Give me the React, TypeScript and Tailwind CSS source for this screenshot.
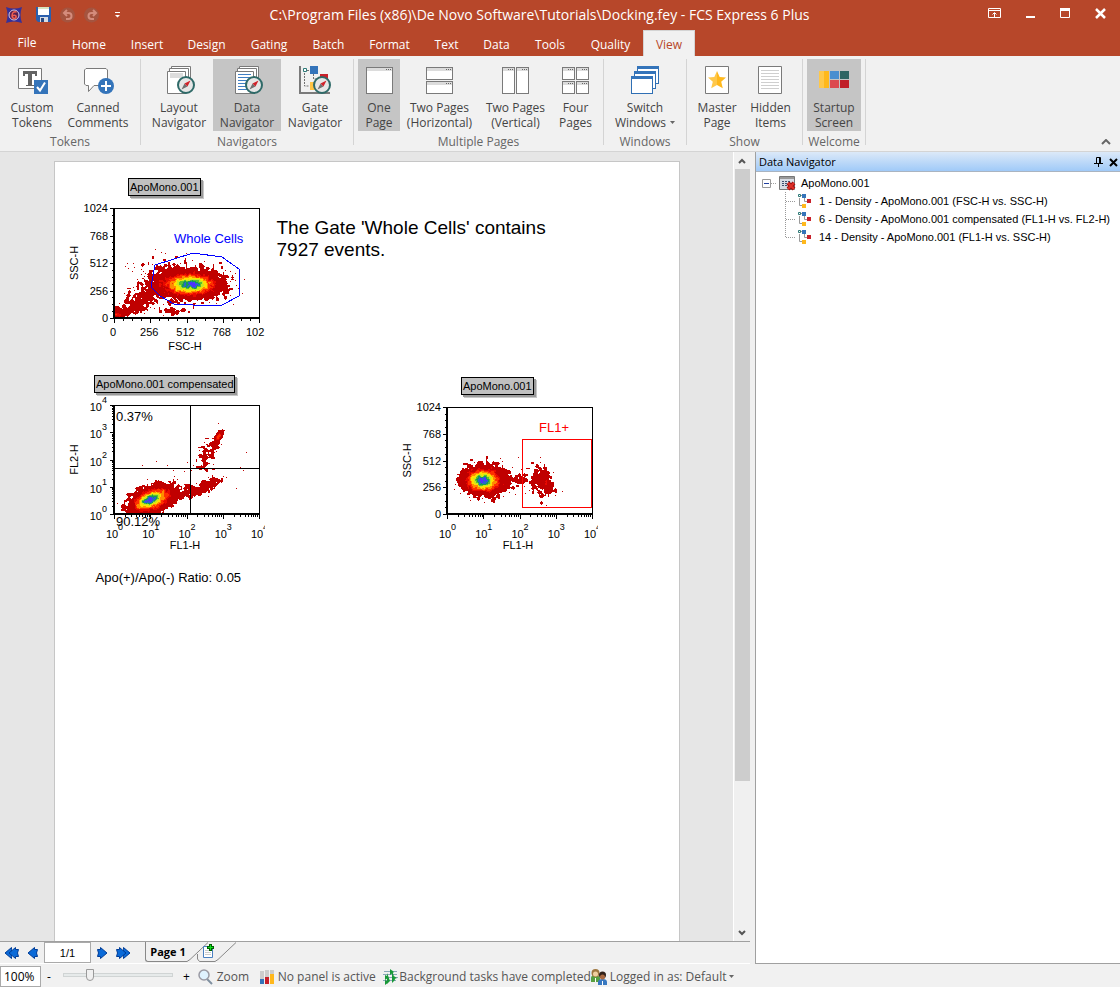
import { useState, type ReactNode } from "react";
import clsx from "clsx";

/* ---------- density plot data ---------- */

type Cluster = { n: number; x: number; y: number; sx: number; sy: number; tilt?: number };

const palette = ["#c00000", "#e80800", "#ff3000", "#ff8c00", "#ffe000", "#c8e820", "#58c030", "#189858", "#2868c8", "#5030ff"];
const levels = [0.9, 4, 7, 11, 16, 22, 28, 34, 40, 46];

function createRandom(seed: number) {
  let s = seed;
  return () => {
    s = (s * 1664525 + 1013904223) % 4294967296;
    return s / 4294967296;
  };
}

function buildDensity(width: number, height: number, clusters: Cluster[], seed: number): string[] {
  const random = createRandom(seed);
  const grid = new Float32Array(width * height);
  const gauss = () => Math.sqrt(-2 * Math.log(random() + 1e-9)) * Math.cos(2 * Math.PI * random());

  clusters.forEach((c) => {
    for (let i = 0; i < c.n; i++) {
      const gx = gauss();
      const px = Math.round(c.x + gx * c.sx);
      const py = Math.round(c.y + gauss() * c.sy + gx * (c.tilt ?? 0));
      for (let dy = -2; dy <= 2; dy++) {
        for (let dx = -2; dx <= 2; dx++) {
          const x = px + dx;
          const y = py + dy;
          if (x < 1 || y < 1 || x >= width || y >= height - 1) continue;
          grid[y * width + x] += Math.exp(-(dx * dx + dy * dy) / 1.5);
        }
      }
    }
  });

  const max = grid.reduce((a, b) => Math.max(a, b), 0);
  const scale = 53 / max;
  const paths = palette.map(() => "");
  const levelOf = (v: number) => {
    if (v < 0.56) return -1;
    let level = 0;
    for (let i = 1; i < levels.length; i++) if (v * scale >= levels[i]) level = i;
    return level;
  };

  for (let y = 0; y < height; y++) {
    let x = 0;
    while (x < width) {
      const level = levelOf(grid[y * width + x]);
      let end = x + 1;
      while (end < width && levelOf(grid[y * width + end]) === level) end++;
      if (level >= 0) paths[level] += `M${x} ${y}h${end - x}v1h${x - end}z`;
      x = end;
    }
  }
  return paths;
}

const wholeCells = buildDensity(145, 110, [
  { n: 2600, x: 76, y: 76, sx: 15, sy: 7 },
  { n: 3200, x: 76, y: 76, sx: 10, sy: 4 },
  { n: 250, x: 50, y: 74, sx: 12, sy: 8 },
  { n: 210, x: 26, y: 91, sx: 11, sy: 7, tilt: -4 },
  { n: 70, x: 12, y: 103, sx: 8, sy: 3, tilt: -2 },
  { n: 70, x: 2, y: 106, sx: 3, sy: 1 },
  { n: 55, x: 50, y: 56, sx: 20, sy: 7 },
  { n: 40, x: 60, y: 103, sx: 7, sy: 2 },
], 11);

const compensated = buildDensity(145, 109, [
  { n: 2200, x: 36, y: 95, sx: 9, sy: 6, tilt: -2 },
  { n: 1500, x: 36, y: 94, sx: 6, sy: 3, tilt: -2 },
  { n: 450, x: 48, y: 91, sx: 9, sy: 5, tilt: -2 },
  { n: 60, x: 74, y: 86, sx: 6, sy: 3 },
  { n: 130, x: 93, y: 80, sx: 8, sy: 3, tilt: -4 },
  { n: 110, x: 104, y: 32, sx: 2, sy: 3, tilt: -2 },
  { n: 80, x: 94, y: 46, sx: 5, sy: 7, tilt: -3 },
  { n: 24, x: 75, y: 64, sx: 24, sy: 6 },
], 5);

const sideScatter = buildDensity(145, 107, [
  { n: 2200, x: 35, y: 73, sx: 9, sy: 6 },
  { n: 1600, x: 35, y: 73, sx: 6, sy: 4 },
  { n: 450, x: 42, y: 72, sx: 11, sy: 8 },
  { n: 50, x: 72, y: 73, sx: 6, sy: 3 },
  { n: 230, x: 95, y: 74, sx: 6, sy: 8, tilt: 2 },
], 23);

/* ---------- plots ---------- */

const BOX_X = 50;
const BOX_Y = 32;
const BOX_W = 145;
const logMinor = [0.301, 0.477, 0.602, 0.699, 0.778, 0.845, 0.903, 0.954];

type PlotProps = {
  title: string;
  titleWidth: number;
  height: number;
  density: string[];
  xName: string;
  yName: string;
  logX?: boolean;
  logY?: boolean;
  className: string;
  children?: ReactNode;
};

function Plot({ title, titleWidth, height, density, xName, yName, logX, logY, className, children }: PlotProps) {
  const bottom = BOX_Y + height;
  const steps = [0, 1, 2, 3, 4];
  const minor = (log?: boolean) => (log ? logMinor : [0.25, 0.5, 0.75]);
  const titleX = 100 - Math.floor(titleWidth / 2);

  return (
    <svg className={clsx("absolute", className)} width="201" height="178" fontFamily="Liberation Sans, Arial, sans-serif" fontSize="11">
      <rect x={titleX + 3} y="5" width={titleWidth} height="18" fill="#c8c8c8" />
      <rect x={titleX + 2} y="4" width={titleWidth} height="18" fill="#9a9a9a" />
      <rect x={titleX + 0.5} y="2.5" width={titleWidth - 1} height="17" fill="#c0c0c0" stroke="#000" />
      <text x={titleX + 2} y="15">{title}</text>

      <g transform={`translate(${BOX_X} ${BOX_Y})`} shapeRendering="crispEdges">
        {density.map((d, i) => (
          <path key={palette[i]} d={d} fill={palette[i]} />
        ))}
      </g>

      <g shapeRendering="crispEdges" stroke="#000" fill="none">
        <path d={`M${BOX_X} ${BOX_Y + 0.5}h${BOX_W + 0.5}V${bottom}`} />
        <path d={`M${BOX_X} ${BOX_Y}V${bottom}H${BOX_X + BOX_W + 1}`} strokeWidth="2" />
        {steps.map((s) => {
          const x = Math.round(BOX_X + (BOX_W * s) / 4) + 0.5;
          const y = Math.round(bottom - (height * s) / 4) + 0.5;
          return <path key={s} d={`M${x} ${bottom}v5M${BOX_X - 4} ${y}h4`} />;
        })}
        {steps.slice(0, 4).map((s) => (
          <g key={s}>
            {minor(logX).map((m) => (
              <path key={m} d={`M${Math.round(BOX_X + (BOX_W * (s + m)) / 4) + 0.5} ${bottom}v3`} />
            ))}
            {minor(logY).map((m) => (
              <path key={m} d={`M${BOX_X - 2} ${Math.round(bottom - (height * (s + m)) / 4) + 0.5}h2`} />
            ))}
          </g>
        ))}
      </g>

      {steps.map((s) => {
        const x = BOX_X + (BOX_W * s) / 4;
        return logX ? (
          <g key={s}>
            <text x={x - 8} y={bottom + 24}>10</text>
            <text x={x + 4} y={bottom + 16} fontSize="9">{s}</text>
          </g>
        ) : (
          <text key={s} x={s === 4 ? x - 13 : x - 1} y={bottom + 18} textAnchor={s === 4 ? "start" : "middle"}>
            {s === 4 ? "102" : s * 256}
          </text>
        );
      })}
      {steps.map((s) => {
        const y = bottom - (height * s) / 4;
        return logY ? (
          <g key={s}>
            <text x="38" y={y + 6} textAnchor="end">10</text>
            <text x="38" y={y - 2} fontSize="9">{s}</text>
          </g>
        ) : (
          <text key={s} x="44" y={y + 4} textAnchor="end">{s * 256}</text>
        );
      })}
      <text x="121" y={bottom + (logX ? 35 : 32)} textAnchor="middle">{xName}</text>
      <text transform={`translate(14 ${BOX_Y + height / 2}) rotate(-90)`} textAnchor="middle">{yName}</text>
      <g transform={`translate(${BOX_X} ${BOX_Y})`}>{children}</g>
    </svg>
  );
}

/* ---------- ribbon icons ---------- */

function Icon({ children }: { children: ReactNode }) {
  return (
    <svg width="32" height="32" viewBox="0 0 32 32" fill="none" className="shrink-0">
      {children}
    </svg>
  );
}

function Compass() {
  return (
    <g>
      <circle cx="23" cy="21" r="8" fill="#e6e6e6" stroke="#2f6a68" strokeWidth="2" />
      <path d="M18.500 25.500 21.500 19.500 24.500 22.500z" fill="#707070" />
      <path d="M27.500 16.500 24.500 22.500 21.500 19.500z" fill="#d0222a" />
    </g>
  );
}

function StackedPages() {
  return (
    <g fill="#fff" stroke="#7a7a7a">
      <path d="M8.500 2.500h19v21h-19z" />
      <path d="M6.500 4.500h19v21h-19z" />
      <path d="M4.500 7.500h18v22h-18z" />
    </g>
  );
}

function PageFrame({ x, y, w, h }: { x: number; y: number; w: number; h: number }) {
  return (
    <g shapeRendering="crispEdges">
      <rect x={x + 0.5} y={y + 0.5} width={w - 1} height={h - 1} fill="#fff" stroke="#7a7a7a" />
      <rect x={x + 1} y={y + 1} width={w - 2} height="3" fill="#dcdcdc" />
      <path d={`M${x + w - 7} ${y + 2.5}h1m1 0h1m1 0h1`} stroke="#666" />
    </g>
  );
}

const CustomTokensIcon = () => (
  <Icon>
    <path d="M2.500 4.500h23v20h-23z" fill="#fff" stroke="#7a7a7a" />
    <path d="M7 7h14v5h-2v-2h-3v11h2v1h-8v-1h2V10H9v2H7z" fill="#636363" />
    <path d="M18 16h14v14H18z" fill="#3474ba" />
    <path d="m21 23 3 3.500 5-8" stroke="#fff" strokeWidth="2" />
  </Icon>
);

const CannedCommentsIcon = () => (
  <Icon>
    <path d="M4 4.500h20l1.500 1.500v14L24 21.500H12L6.500 27.500V21.500H4L2.500 20V6z" fill="#fff" stroke="#7a7a7a" />
    <circle cx="24" cy="22" r="8" fill="#3474ba" />
    <path d="M19 22h10M24 17v10" stroke="#fff" strokeWidth="2" />
  </Icon>
);

const LayoutNavigatorIcon = () => (
  <Icon>
    <StackedPages />
    <path d="M7 9h13v5H7z" fill="#dcdcdc" />
    <Compass />
  </Icon>
);

const DataNavigatorIcon = () => (
  <Icon>
    <StackedPages />
    <path d="M7 10.500h13M7 13.500h13M7 16.500h13M7 19.500h13M7 22.500h13M7 25.500h13" stroke="#3f7fc4" />
    <Compass />
  </Icon>
);

const GateNavigatorIcon = () => (
  <Icon>
    <path d="M1 2v27h30" stroke="#7a7a7a" strokeWidth="2" />
    <path d="M5.500 9v13h5M8 6.500h3M14.500 10v5h6" stroke="#707070" strokeDasharray="2 1" />
    <path d="M4.500 4.500h3v3h-3z" fill="#fff" stroke="#2f7a78" />
    <path d="M11 2h8v8h-8z" fill="#3474ba" />
    <path d="M21 10h8v8h-8z" fill="#c8202a" />
    <path d="M11 18h8v8h-8z" fill="#ffc444" />
    <Compass />
  </Icon>
);

const OnePageIcon = () => (
  <Icon>
    <PageFrame x={3} y={3} w={27} h={27} />
  </Icon>
);

const TwoHorizontalIcon = () => (
  <Icon>
    <PageFrame x={2} y={3} w={27} h={13} />
    <PageFrame x={2} y={17} w={27} h={13} />
  </Icon>
);

const TwoVerticalIcon = () => (
  <Icon>
    <PageFrame x={2} y={3} w={13} h={27} />
    <PageFrame x={16} y={3} w={13} h={27} />
  </Icon>
);

const FourPagesIcon = () => (
  <Icon>
    <PageFrame x={2} y={3} w={13} h={13} />
    <PageFrame x={16} y={3} w={13} h={13} />
    <PageFrame x={2} y={17} w={13} h={13} />
    <PageFrame x={16} y={17} w={13} h={13} />
  </Icon>
);

const SwitchWindowsIcon = () => (
  <Icon>
    {[[8, 2], [5, 7], [2, 12]].map(([x, y]) => (
      <g key={x}>
        <rect x={x + 0.5} y={y + 0.5} width="21" height="17" fill="#fff" stroke="#2f6fb4" />
        <path d={`M${x} ${y}h22v3H${x}z`} fill="#3474ba" />
      </g>
    ))}
  </Icon>
);

const MasterPageIcon = () => (
  <Icon>
    <path d="M4.500 2.500h23v27h-23z" fill="#fff" stroke="#7a7a7a" />
    <path d="m16 7 2.700 6 6.300.6-4.800 4.200 1.600 6.500L16 21z" fill="#ffb81c" />
    <path d="m16 7-2.700 6-6.300.6 4.800 4.200-1.600 6.500L16 21z" fill="#ffc84a" />
  </Icon>
);

const HiddenItemsIcon = () => (
  <Icon>
    <path d="M3.500 2.500h23v27h-23z" fill="#fff" stroke="#7a7a7a" />
    <path d="M6 6.500h18M6 9.500h18M6 12.500h18M6 15.500h18M6 18.500h18M6 21.500h18M6 24.500h18" stroke="#cfcfcf" />
  </Icon>
);

const StartupIcon = () => (
  <Icon>
    <path d="M1 7h5v17H1z" fill="#ffc84a" />
    <path d="M6 7h5v17H6z" fill="#ffb81c" />
    <path d="M12 7h9v8h-9z" fill="#4a8ed0" />
    <path d="M22 7h9v8h-9z" fill="#2f6563" />
    <path d="M12 16h9v8h-9z" fill="#dc4a50" />
    <path d="M22 16h9v8h-9z" fill="#c01e28" />
  </Icon>
);

const TreeIcon = () => (
  <svg width="13" height="14" fill="none" className="shrink-0">
    <path d="M1.500 4v7.500H5M3 1.500h3M6.500 4v3.500H10" stroke="#999" />
    <path d="M.5.500h2v2h-2z" fill="#fff" stroke="#2f7a78" />
    <path d="M4 0h4v4H4z" fill="#3474ba" />
    <path d="M9 5h4v4H9z" fill="#c8202a" />
    <path d="M4 10h4v4H4z" fill="#ffb81c" />
  </svg>
);

/* ---------- ribbon ---------- */

const tabs = [
  { label: "Home", width: "w-[60px]" },
  { label: "Insert", width: "w-[56px]" },
  { label: "Design", width: "w-[63px]" },
  { label: "Gating", width: "w-[62px]" },
  { label: "Batch", width: "w-[57px]" },
  { label: "Format", width: "w-[65px]" },
  { label: "Text", width: "w-[49px]" },
  { label: "Data", width: "w-[51px]" },
  { label: "Tools", width: "w-[56px]" },
  { label: "Quality", width: "w-[65px]" },
  { label: "View", width: "w-[52px]" },
];

const groups = [
  {
    name: "Tokens",
    items: [
      { lines: ["Custom", "Tokens"], width: "w-[56px]", icon: <CustomTokensIcon /> },
      { lines: ["Canned", "Comments"], width: "w-[76px]", icon: <CannedCommentsIcon /> },
    ],
  },
  {
    name: "Navigators",
    items: [
      { lines: ["Layout", "Navigator"], width: "w-[68px]", icon: <LayoutNavigatorIcon /> },
      { lines: ["Data", "Navigator"], width: "w-[68px]", icon: <DataNavigatorIcon />, active: true },
      { lines: ["Gate", "Navigator"], width: "w-[68px]", icon: <GateNavigatorIcon /> },
    ],
  },
  {
    name: "Multiple Pages",
    items: [
      { lines: ["One", "Page"], width: "w-[42px]", icon: <OnePageIcon />, active: true },
      { lines: ["Two Pages", "(Horizontal)"], width: "w-[79px]", icon: <TwoHorizontalIcon /> },
      { lines: ["Two Pages", "(Vertical)"], width: "w-[73px]", icon: <TwoVerticalIcon /> },
      { lines: ["Four", "Pages"], width: "w-[47px]", icon: <FourPagesIcon /> },
    ],
  },
  {
    name: "Windows",
    items: [{ lines: ["Switch", "Windows"], width: "w-[74px]", icon: <SwitchWindowsIcon />, menu: true }],
  },
  {
    name: "Show",
    items: [
      { lines: ["Master", "Page"], width: "w-[52px]", icon: <MasterPageIcon /> },
      { lines: ["Hidden", "Items"], width: "w-[55px]", icon: <HiddenItemsIcon /> },
    ],
  },
  {
    name: "Welcome",
    items: [{ lines: ["Startup", "Screen"], width: "w-[54px]", icon: <StartupIcon />, active: true }],
  },
];

type RibbonItem = { lines: string[]; width: string; icon: ReactNode; active?: boolean; menu?: boolean };

function RibbonButton({ lines, width, icon, active, menu }: RibbonItem) {
  return (
    <button
      className={clsx(
        "flex h-[72px] shrink-0 flex-col items-center pt-[5px] text-xs leading-[15px] whitespace-nowrap text-[#444]",
        width,
        active && "bg-[#c5c5c5]",
      )}
    >
      {icon}
      <span className="mt-1">{lines[0]}</span>
      <span className="flex items-center gap-1">
        {lines[1]}
        {menu && (
          <svg width="5" height="3"><path d="M0 0h5L2.500 3z" fill="#666" /></svg>
        )}
      </span>
    </button>
  );
}

function TitleBar() {
  return (
    <header className="flex h-[30px] shrink-0 items-center bg-[#b7472a] text-white">
      <div className="flex w-[200px] shrink-0 items-center pl-1.5">
        <svg width="16" height="16" fill="none">
          <path d="M0 0q8 3 16 0-3 8 0 16-8-3-16 0Q3 8 0 0z" fill="#34309a" />
          <circle cx="8" cy="8" r="5" fill="#5a2050" stroke="#d8c8e0" />
          <path d="M10.500 5Q6 4 6 9q.5 2.500 2.500 2.500 2-.5 1.500-2.500-1.500-1.500-4 0" stroke="#f06050" strokeWidth="1.500" />
        </svg>
        <button aria-label="Save" className="ml-3.5">
          <svg width="16" height="16">
            <path d="M0 0h15v15H2l-2-2z" fill="#2a5fae" />
            <path d="M2 0h11v8H2z" fill="#fff" />
            <path d="M2 0h11v2H2z" fill="#d8e4c0" />
            <path d="M4 10h8v5H4z" fill="#d8dce4" />
            <path d="M5 11h3v4H5z" fill="#2a4a80" />
          </svg>
        </button>
        <button aria-label="Undo" className="ml-2">
          <svg width="16" height="16" fill="none">
            <circle cx="7.500" cy="8" r="7.500" fill="#a5543f" />
            <path d="M7 3 4 6l3 3M4 6h4.500a3 3 0 0 1 0 6H6" stroke="#d48c7c" strokeWidth="2" />
          </svg>
        </button>
        <button aria-label="Redo" className="ml-2">
          <svg width="16" height="16" fill="none">
            <circle cx="7.500" cy="8" r="7.500" fill="#a5543f" />
            <path d="m9 3 3 3-3 3M12 6H7.500a3 3 0 0 0 0 6H10" stroke="#d48c7c" strokeWidth="2" />
          </svg>
        </button>
        <button aria-label="Customize toolbar" className="ml-3.5">
          <svg width="7" height="6"><path d="M1 0h5v1H1zM1 3h5L3.500 5.500z" fill="#fff" /></svg>
        </button>
      </div>
      <h1 className="min-w-0 flex-1 truncate text-center text-sm">
        C:\Program Files (x86)\De Novo Software\Tutorials\Docking.fey - FCS Express 6 Plus
      </h1>
      <div className="flex w-[241px] shrink-0 items-center justify-end gap-6 pr-3.5 pb-1">
        <button aria-label="Ribbon display options">
          <svg width="13" height="11" fill="none" stroke="#fff">
            <path d="M.5.500h12v9H.5zM0 2.500h13M6.500 9V5M4.500 6.500l2-2 2 2" />
          </svg>
        </button>
        <button aria-label="Minimize">
          <svg width="11" height="11"><path d="M1 8h9v2H1z" fill="#fff" /></svg>
        </button>
        <button aria-label="Maximize">
          <svg width="11" height="11" fill="none"><path d="M.5.500h9v9h-9z" stroke="#fff" /><path d="M0 0h10v3H0z" fill="#fff" /></svg>
        </button>
        <button aria-label="Close">
          <svg width="11" height="11"><path d="m1 1 9 9M10 1 1 10" stroke="#fff" strokeWidth="2.500" /></svg>
        </button>
      </div>
    </header>
  );
}

function Ribbon() {
  const [tab, setTab] = useState("View");

  return (
    <>
      <nav className="flex h-[26px] shrink-0 bg-[#b7472a] text-xs text-white">
        <button className="mr-[5px] w-[54px]">File</button>
        {tabs.map(({ label, width }) => (
          <button
            key={label}
            onClick={() => setTab(label)}
            className={clsx("shrink-0 pt-[3px]", width, tab === label && "border border-b-0 border-[#d4d4d4] bg-[#f1f1f1] text-[#b7472a]")}
          >
            {label}
          </button>
        ))}
      </nav>
      <div className="flex h-24 shrink-0 border-b border-[#d4d4d4] bg-[#f1f1f1] pt-px">
        {groups.map((group) => (
          <section key={group.name} className="flex shrink-0">
            <div className="flex flex-col px-1 pt-0.5">
              <div className="flex">
                {group.items.map((item) => (
                  <RibbonButton key={item.lines.join(" ")} {...item} />
                ))}
              </div>
              <h2 className="flex flex-1 items-center justify-center pt-0.5 text-xs text-[#666]">{group.name}</h2>
            </div>
            <div className="mt-0.5 mb-[6px] w-px bg-[#d4d4d4]" />
          </section>
        ))}
        <button aria-label="Collapse ribbon" className="mt-auto ml-auto pr-[9px] pb-1.5">
          <svg width="10" height="6" fill="none"><path d="m1 5 4-4 4 4" stroke="#666" strokeWidth="2" /></svg>
        </button>
      </div>
    </>
  );
}

/* ---------- document ---------- */

function Document() {
  return (
    <main className="flex min-w-0 flex-1 overflow-hidden bg-[#e6e6e6] pt-[9px]">
      <div className="relative mx-auto w-[626px] shrink-0 border border-b-0 border-[#c6c6c6] bg-white font-['Liberation_Sans',Arial,sans-serif] text-black">
        <Plot title="ApoMono.001" titleWidth={73} height={110} density={wholeCells} xName="FSC-H" yName="SSC-H" className="top-[14px] left-[9px]">
          <path d="m41 57 38-12 29 4 17 12v27l-17 9H79l-19-1-14-8-9-9z" fill="none" stroke="#00f" shapeRendering="crispEdges" />
          <text x="60" y="35" fontSize="13" fill="#00f">Whole Cells</text>
        </Plot>
        <p className="absolute top-[55px] left-[222px] w-[290px] text-[19px] leading-[22px]">
          The Gate 'Whole Cells' contains 7927 events.
        </p>
        <Plot title="ApoMono.001 compensated" titleWidth={141} height={109} density={compensated} xName="FL1-H" yName="FL2-H" logX logY className="top-[211px] left-[9px]">
          <path d="M76.500 0v109M0 63.500h145" stroke="#000" shapeRendering="crispEdges" />
          <text x="2" y="16" fontSize="13">0.37%</text>
          <text x="2" y="121" fontSize="13">90.12%</text>
        </Plot>
        <Plot title="ApoMono.001" titleWidth={73} height={107} density={sideScatter} xName="FL1-H" yName="SSC-H" logX className="top-[213px] left-[342px]">
          <path d="M75.500 32.500h69v68h-69z" fill="none" stroke="#f00" shapeRendering="crispEdges" />
          <text x="92" y="25" fontSize="13" fill="#f00">FL1+</text>
        </Plot>
        <p className="absolute top-[407px] left-[41px] text-[13px] leading-[18px]">Apo(+)/Apo(-) Ratio: 0.05</p>
      </div>
    </main>
  );
}

function ScrollBar() {
  return (
    <div className="flex w-[17px] shrink-0 flex-col items-center border-l border-white bg-[#f0f0f0]">
      <button aria-label="Scroll up" className="flex h-[17px] w-full items-center justify-center">
        <svg width="8" height="6" fill="none"><path d="m1 5 3-3 3 3" stroke="#555" strokeWidth="2" /></svg>
      </button>
      <div className="flex w-full flex-1 flex-col items-end">
        <div className="h-[81%] w-[15px] bg-[#cdcdcd]" />
      </div>
      <button aria-label="Scroll down" className="flex h-[17px] w-full items-center justify-center">
        <svg width="8" height="6" fill="none"><path d="m1 1 3 3 3-3" stroke="#555" strokeWidth="2" /></svg>
      </button>
    </div>
  );
}

function PageArrow({ label, left, double }: { label: string; left?: boolean; double?: boolean }) {
  return (
    <button aria-label={label} className="shrink-0">
      <svg width={double ? 15 : 11} height="14" className={left ? "rotate-180" : undefined} fill="#0a6ad8" stroke="#003c96">
        {double && <path d="M7.500 3.500v-2L14 7l-6.500 5.500v-2z" />}
        <path d="M.5 3.500h3v-2L10 7l-6.500 5.500v-2h-3l1-3.500z" />
      </svg>
    </button>
  );
}

function PageBar() {
  return (
    <div className="flex h-[23px] shrink-0 items-center border-t border-b border-t-[#a0a0a0] border-b-white bg-[#f0f0f0] font-['Liberation_Sans',Arial,sans-serif] text-[11px] text-black">
      <div className="flex w-11 shrink-0 items-center gap-2 pl-1">
        <PageArrow label="First page" left double />
        <PageArrow label="Previous page" left />
      </div>
      <input aria-label="Page" defaultValue="1/1" className="h-[21px] w-[47px] border border-[#aaa] bg-white text-center" />
      <div className="flex w-[54px] shrink-0 items-center gap-2 pl-1.5">
        <PageArrow label="Next page" />
        <PageArrow label="Last page" double />
      </div>
      <div className="flex h-full items-start">
        <button className="h-5 w-[41px] rounded-bl-[3px] border-b border-l border-[#888] pl-1 font-['Open_Sans',sans-serif] text-[11px] leading-5 font-bold whitespace-nowrap">Page 1</button>
        <svg width="52" height="21" fill="none" stroke="#888">
          <path d="M0 19.500h1l3-2L22 .5M11.500 12v5l2 2.500H29l3-2L50 .5" />
          <path d="M17.500 4.500h9v11h-9z" fill="#fff" stroke="#4a80c0" />
          <path d="M19 8.500h5M19 10.500h6M19 12.500h6" stroke="#ccc" />
          <path d="M24.500 2v7M21 5.500h7" stroke="#006000" strokeWidth="3" />
          <path d="M24.500 3v5M22 5.500h5" stroke="#10e020" />
        </svg>
      </div>
    </div>
  );
}

/* ---------- data navigator ---------- */

const plotsInFile = [
  "1 - Density - ApoMono.001 (FSC-H vs. SSC-H)",
  "6 - Density - ApoMono.001 compensated (FL1-H vs. FL2-H)",
  "14 - Density - ApoMono.001 (FL1-H vs. SSC-H)",
];

function DataNavigator() {
  return (
    <aside className="ml-[5px] flex w-[365px] shrink-0 flex-col border-b border-l border-[#a0a0a0] bg-white font-['Liberation_Sans',Arial,sans-serif] text-[11px] text-black">
      <header className="flex h-5 shrink-0 items-center border-b border-[#aab4c0] bg-linear-to-b from-[#dce9f8] to-[#a0caf8] pt-px pl-[3px]">
        <h2 className="flex-1 font-['Open_Sans',sans-serif] leading-4">Data Navigator</h2>
        <button aria-label="Pin" className="mr-1.5">
          <svg width="9" height="10" fill="none" stroke="#000"><path d="M2.500 6V.5h4V6M5.500 0v6M0 6.500h9M4.500 7v3" /></svg>
        </button>
        <button aria-label="Close panel" className="mr-0.5">
          <svg width="9" height="9"><path d="m1 1 7 7M8 1 1 8" stroke="#000" strokeWidth="2" /></svg>
        </button>
      </header>
      <div className="pt-0.5">
        <div className="flex h-[18px] items-center pl-1.5">
          <button aria-label="Collapse">
            <svg width="9" height="9" fill="none"><path d="M.5.500h8v8h-8z" stroke="#999" /><path d="M2 4.500h5" stroke="#2040a0" /></svg>
          </button>
          <div className="w-[5px] border-t border-dotted border-[#a0a0a0]" />
          <svg width="17" height="15" fill="none" className="mr-[5px] ml-[3px]">
            <path d="M.5.500h15v13H.5z" fill="#d8dce4" stroke="#777" />
            <path d="M1 1h14v2H1z" fill="#999" />
            <path d="M3 5.500h8M3 7.500h8M3 9.500h8" stroke="#405070" strokeDasharray="2 1" />
            <path d="m9 7 6 6M15 7l-6 6" stroke="#a01010" strokeWidth="4" />
            <path d="m9 7 6 6M15 7l-6 6" stroke="#e03028" strokeWidth="2" />
          </svg>
          ApoMono.001
        </div>
        <ul>
          {plotsInFile.map((name, i) => (
            <li key={name} className="flex h-[18px] items-center pl-[29px]">
              <svg width="13" height="18" fill="none" stroke="#999" strokeDasharray="1 1">
                <path d={i === 2 ? "M.5 0v9" : "M.5 0v18"} />
                <path d="M1 9.500h9" />
              </svg>
              <TreeIcon />
              <span className="ml-2 whitespace-nowrap">{name}</span>
            </li>
          ))}
        </ul>
      </div>
    </aside>
  );
}

/* ---------- status bar ---------- */

function StatusBar() {
  return (
    <footer className="flex h-[23px] shrink-0 items-center bg-[#f1f1f1] pt-0.5 text-xs whitespace-nowrap text-[#555]">
      <input aria-label="Zoom level" defaultValue="100%" className="h-[21px] w-[41px] shrink-0 border border-[#aaa] bg-white pl-[3px] text-black" />
      <button className="ml-1.5 text-black">-</button>
      <input
        type="range"
        aria-label="Zoom"
        defaultValue={22}
        className="mr-2.5 mb-1 ml-3 h-1 w-[110px] shrink-0 appearance-none border border-[#d0d4d4] bg-[#e6eaea] [&::-webkit-slider-thumb]:h-3 [&::-webkit-slider-thumb]:w-2 [&::-webkit-slider-thumb]:appearance-none [&::-webkit-slider-thumb]:rounded-b [&::-webkit-slider-thumb]:border [&::-webkit-slider-thumb]:border-[#999] [&::-webkit-slider-thumb]:bg-[#f0f0f0]"
      />
      <button className="text-black">+</button>
      <button className="ml-2 flex w-[62px] shrink-0 items-center gap-[3px]">
        <svg width="16" height="16" fill="none">
          <path d="m9 10 5 5" stroke="#8090a0" strokeWidth="2" />
          <circle cx="6" cy="6" r="5" fill="#dff2ff" stroke="#9a9aa4" strokeWidth="1.500" />
        </svg>
        Zoom
      </button>
      <div className="flex w-[122px] shrink-0 items-center gap-[3px]">
        <svg width="15" height="14">
          <path d="M0 1h4v8H0zM5 0h4v7H5zM10 0h4v4h-4z" fill="#ccc" />
          <path d="M0 9h4v5H0z" fill="#3474ba" />
          <path d="M5 7h4v7H5z" fill="#c8202a" />
          <path d="M10 4h4v10h-4z" fill="#ffb81c" />
        </svg>
        No panel is active
      </div>
      <div className="flex w-[209px] shrink-0 items-center gap-px">
        <svg width="17" height="16">
          <path d="M2 2.500h13M1 5.500h14M3 8.500h13M1 11.500h13" stroke="#8aa8b8" />
          <path d="M5 4v11l3-3zM10 1v13l3-3zM8 0v6l4-3zM3 6v5l4-3zM10 6v5l5-2zM3 11v5l4-3z" fill="#189838" />
        </svg>
        Background tasks have completed
      </div>
      <button className="flex items-center gap-0.5">
        <svg width="17" height="16">
          <path d="M0 13V9q0-3 4-3t5 3v4z" fill="#58a040" />
          <circle cx="4.500" cy="4" r="4" fill="#a07840" />
          <circle cx="4.500" cy="5" r="2.500" fill="#f0d0a0" />
          <path d="M7 16v-3q0-3 4.500-3t4.500 3v3z" fill="#3878c0" />
          <circle cx="11.500" cy="6" r="3.500" fill="#302018" />
          <circle cx="11.500" cy="8" r="2.500" fill="#a86840" />
          <path d="M11.500 12v4M4.500 9v4" stroke="#fff" />
        </svg>
        Logged in as: Default
        <svg width="5" height="3" className="ml-px"><path d="M0 0h5L2.500 3z" fill="#666" /></svg>
      </button>
    </footer>
  );
}

export default function App() {
  return (
    <div className="flex h-screen flex-col overflow-hidden bg-[#f0f0f0] font-['Open_Sans',sans-serif]">
      <TitleBar />
      <Ribbon />
      <div className="flex min-h-0 flex-1">
        <div className="flex min-w-0 flex-1 flex-col">
          <div className="flex min-h-0 flex-1">
            <Document />
            <ScrollBar />
          </div>
          <PageBar />
        </div>
        <DataNavigator />
      </div>
      <StatusBar />
    </div>
  );
}
